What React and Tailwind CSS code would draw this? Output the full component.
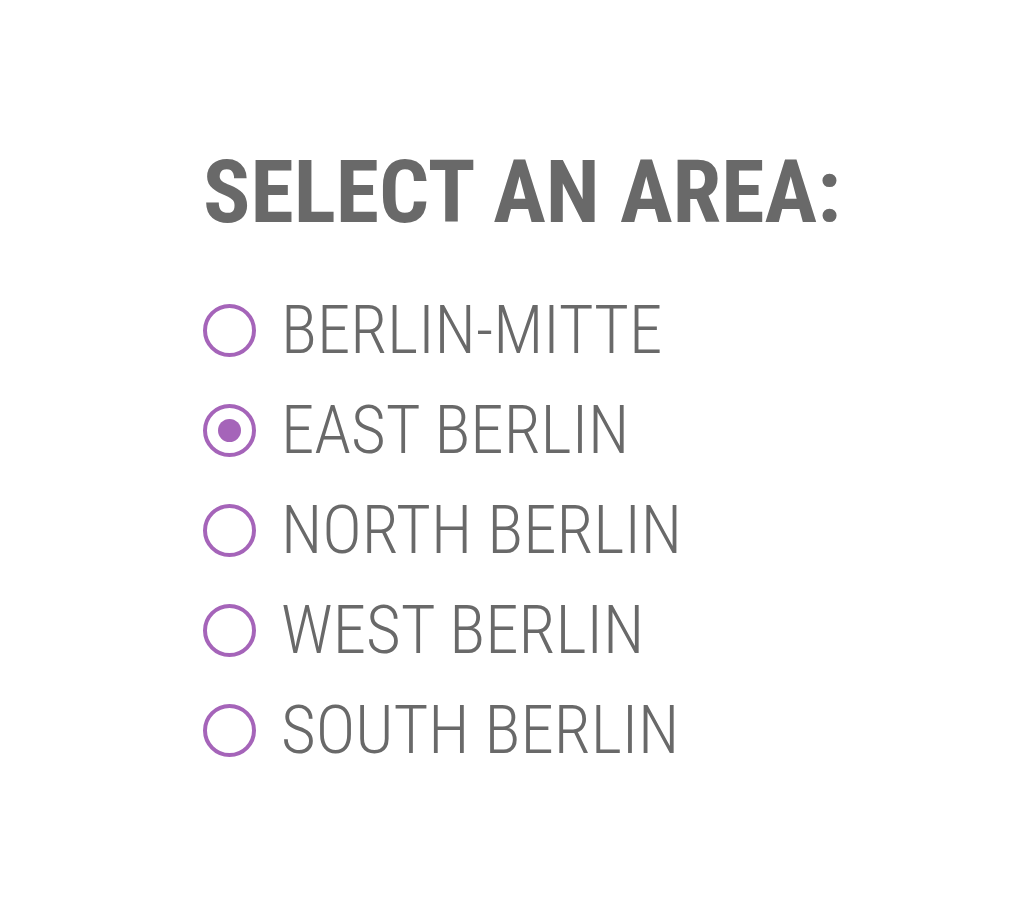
const AREAS = ["BERLIN-MITTE", "EAST BERLIN", "NORTH BERLIN", "WEST BERLIN", "SOUTH BERLIN"];

export default function App() {
  const selected = "EAST BERLIN";

  return (
    <div
      className="min-h-screen w-full bg-white pl-[203px] pt-[148px] text-[#696969]"
      style={{ fontFamily: '"Roboto Condensed", Roboto, sans-serif' }}
    >
      <h1 className="text-[88px] font-bold leading-none">SELECT AN AREA:</h1>
      <div className="mt-[44px] flex flex-col">
        {AREAS.map((area) => (
          <label key={area} className="flex h-[100px] items-center gap-[25px]">
            <span className="flex h-[53px] w-[53px] items-center justify-center rounded-full border-4 border-[#a564b9]">
              {area === selected && <span className="h-[23px] w-[23px] rounded-full bg-[#a564b9]" />}
            </span>
            <span className="text-[67px] font-light leading-none">{area}</span>
          </label>
        ))}
      </div>
    </div>
  );
}
